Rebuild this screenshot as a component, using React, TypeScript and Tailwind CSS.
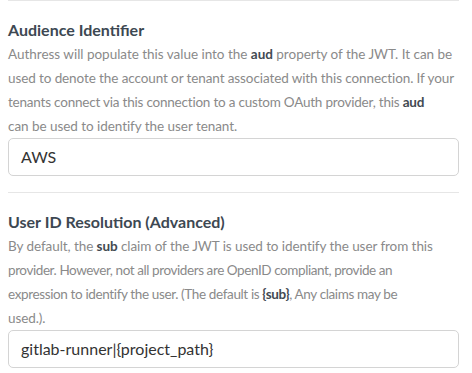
import React from "react";

function B({ children }: { children: React.ReactNode }) {
  return <b className="font-bold text-[#424a52]">{children}</b>;
}

function Section({ title, children, value }: { title: string; children: React.ReactNode; value: string }) {
  return (
    <div className="border-t border-[#e6e6e6] pt-[17px] pb-4">
      <div className="text-[16px] leading-[24px] font-bold text-[#3d4852]">{title}</div>
      <div className="text-[13.5px] leading-[24px] text-[#8a8a8a] whitespace-nowrap">{children}</div>
      <div className="h-[38px] rounded-[5px] border border-[#d4d4d4] px-3 flex items-center text-[16px] text-[#333]">
        {value}
      </div>
    </div>
  );
}

export default function App() {
  return (
    <div
      className="w-[472px] h-[373px] bg-white pl-2 pr-[13px] overflow-hidden"
      style={{ fontFamily: "Lato, 'Open Sans', sans-serif" }}
    >
      <Section title="Audience Identifier" value="AWS">
        <span className="block tracking-[-0.02px]">
          Authress will populate this value into the <B>aud</B> property of the JWT. It can be
        </span>
        <span className="block tracking-[-0.1px]">
          used to denote the account or tenant associated with this connection. If your
        </span>
        <span className="block tracking-[-0.21px]">
          tenants connect via this connection to a custom OAuth provider, this <B>aud</B>
        </span>
        <span className="block tracking-[-0.05px]">can be used to identify the user tenant.</span>
      </Section>
      <Section title="User ID Resolution (Advanced)" value="gitlab-runner|{project_path}">
        <span className="block tracking-[-0.07px]">
          By default, the <B>sub</B> claim of the JWT is used to identify the user from this
        </span>
        <span className="block tracking-[-0.42px]">
          provider. However, not all providers are OpenID compliant, provide an
        </span>
        <span className="block tracking-[-0.37px]">
          expression to identify the user. (The default is <B>{"{sub}"}</B>, Any claims may be
        </span>
        <span className="block tracking-[-0.1px]">used.).</span>
      </Section>
    </div>
  );
}
